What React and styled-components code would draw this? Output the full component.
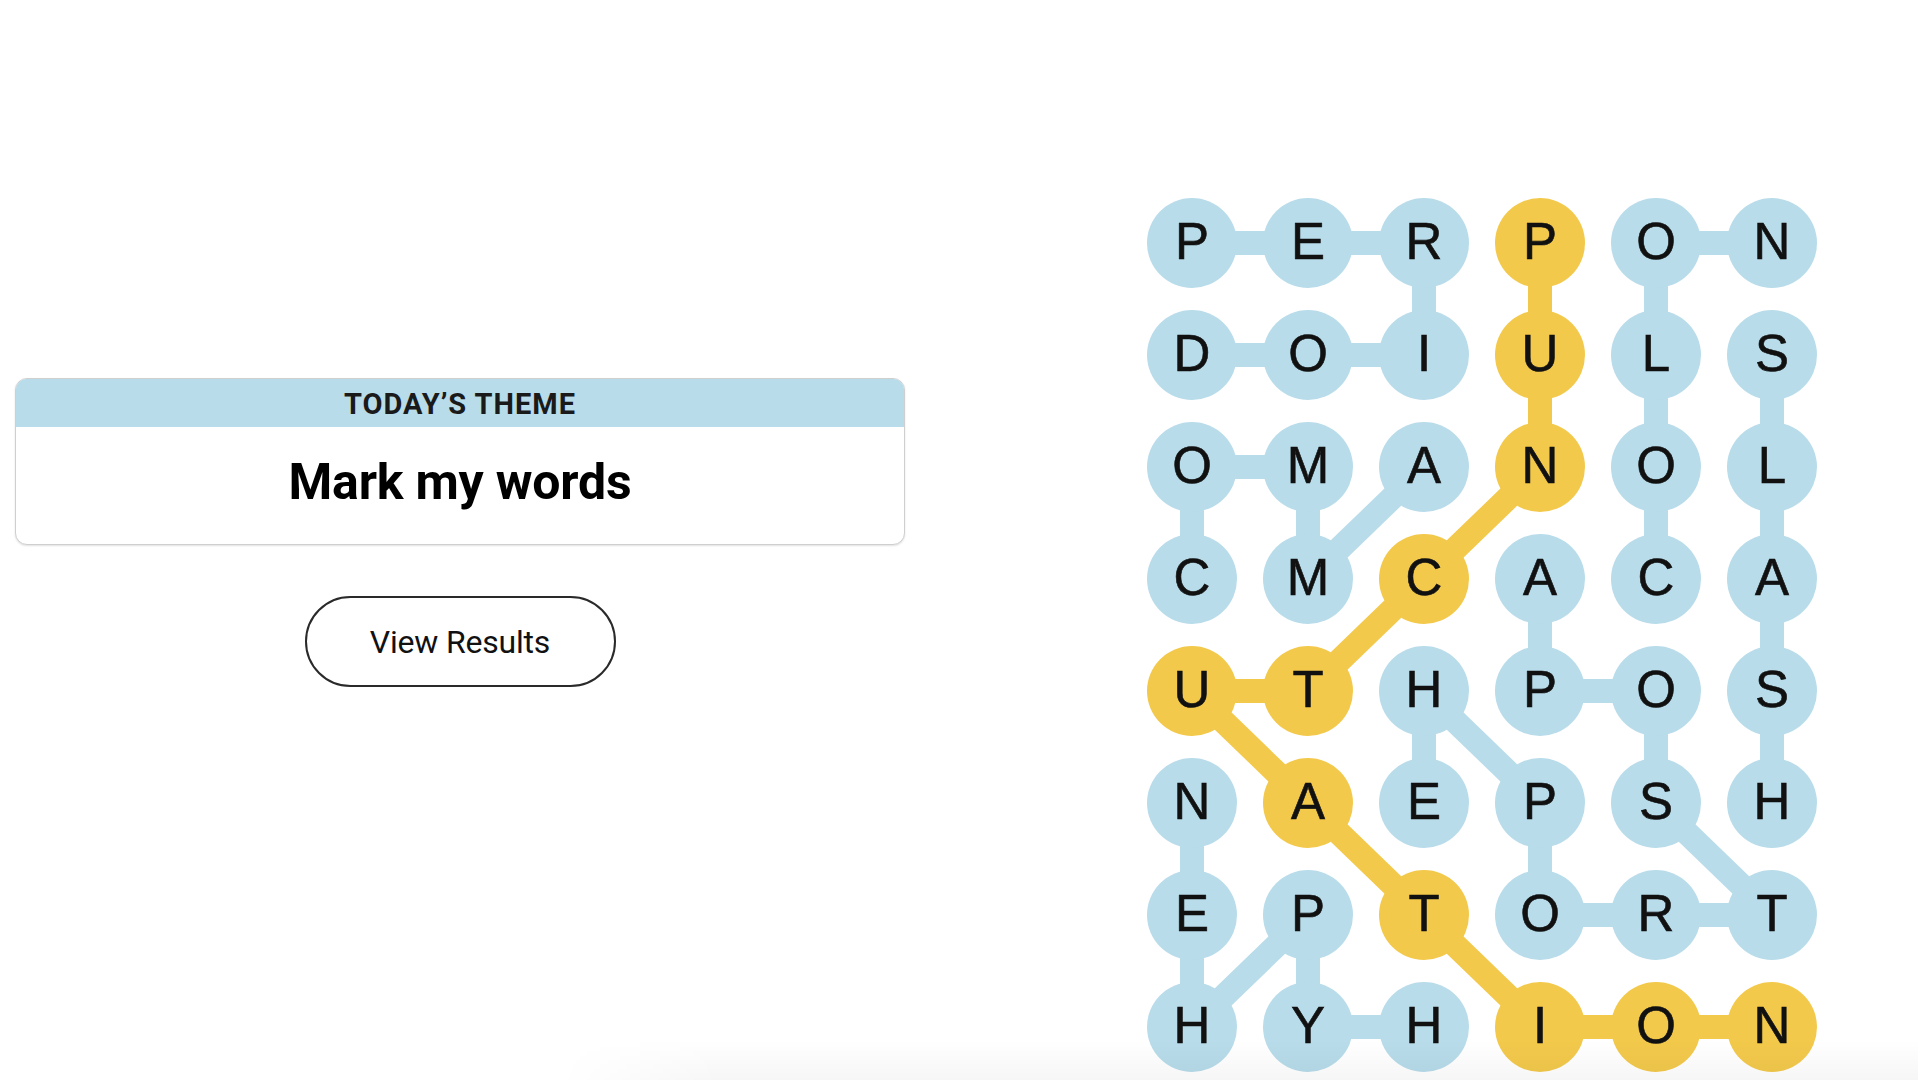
import React from "react";
import styled, { createGlobalStyle } from "styled-components";

const BLUE = "#b8dcea";
const YELLOW = "#f3c94c";

const GlobalStyle = createGlobalStyle`
  html, body { margin: 0; padding: 0; background: #ffffff; }
  body { font-family: "Liberation Sans", Arial, sans-serif; color: #000; }
  * { box-sizing: border-box; }
`;

const Page = styled.div`
  display: flex;
  flex-direction: row;
  align-items: flex-start;
  width: 1918px;
  height: 1080px;
  overflow: hidden;
  position: relative;
`;

const LeftPane = styled.section`
  width: 920px;
  padding: 378px 15px 0 15px;
  display: flex;
  flex-direction: column;
  align-items: center;
  gap: 51px;
`;

const ThemeCard = styled.div`
  width: 890px;
  border: 1.5px solid #cfcfcf;
  border-radius: 12px;
  overflow: hidden;
  background: #fff;
  box-shadow: 0 1px 2px rgba(0, 0, 0, 0.12);
`;

const ThemeHeader = styled.div`
  height: 48px;
  background: ${BLUE};
  display: flex;
  align-items: center;
  justify-content: center;
  padding-top: 1px;
  font-family: Roboto, "Liberation Sans", sans-serif;
  font-weight: 700;
  font-size: 29px;
  letter-spacing: 1px;
  color: #1a1a1a;
`;

const ThemeBody = styled.div`
  height: 117px;
  display: flex;
  align-items: center;
  justify-content: center;
  padding-bottom: 7px;
  font-family: Roboto, "Liberation Sans", sans-serif;
  font-weight: 700;
  font-size: 50px;
  letter-spacing: -0.2px;
  color: #000;
`;

const ResultsButton = styled.button`
  width: 311px;
  height: 91px;
  border: 2px solid #2a2a2a;
  border-radius: 46px;
  background: #fff;
  font-family: Roboto, "Liberation Sans", sans-serif;
  font-size: 32px;
  font-weight: 400;
  color: #111;
  cursor: pointer;
  letter-spacing: -0.2px;
`;

const RightPane = styled.section`
  padding-top: 198px;
  margin-left: 227px;
`;

const CELL = 90;
const COL_PITCH = 116;
const ROW_PITCH = 112;

const Board = styled.div`
  position: relative;
  display: grid;
  grid-template-columns: repeat(6, ${CELL}px);
  grid-auto-rows: ${CELL}px;
  column-gap: ${COL_PITCH - CELL}px;
  row-gap: ${ROW_PITCH - CELL}px;
`;

const Links = styled.svg`
  position: absolute;
  left: 0;
  top: 0;
  z-index: 0;
  pointer-events: none;
`;

const Letter = styled.div`
  position: relative;
  z-index: 1;
  width: ${CELL}px;
  height: ${CELL}px;
  border-radius: 50%;
  background: ${(p) => (p.$span ? YELLOW : BLUE)};
  display: flex;
  align-items: center;
  justify-content: center;
  font-family: "Liberation Sans", Arial, sans-serif;
  font-size: 51px;
  line-height: 1;
  color: #111;
  -webkit-text-stroke: 0.6px #111;
  padding-bottom: 3px;
`;

const BottomFade = styled.div`
  position: absolute;
  left: 560px;
  right: 0;
  bottom: 0;
  height: 40px;
  z-index: 2;
  pointer-events: none;
  background: linear-gradient(to bottom, rgba(0, 0, 0, 0), rgba(0, 0, 0, 0.035));
  -webkit-mask-image: linear-gradient(to right, transparent, #000 160px);
  mask-image: linear-gradient(to right, transparent, #000 160px);
`;

const GRID = ["PERPON", "DOIULS", "OMANOL", "CMCACA", "UTHPOS", "NAEPSH", "EPTORT", "HYHION"];

const WORDS = [
  { span: false, cells: [[0, 0], [0, 1], [0, 2], [1, 2], [1, 1], [1, 0]] },
  { span: false, cells: [[3, 0], [2, 0], [2, 1], [3, 1], [2, 2]] },
  { span: false, cells: [[3, 4], [2, 4], [1, 4], [0, 4], [0, 5]] },
  { span: false, cells: [[1, 5], [2, 5], [3, 5], [4, 5], [5, 5]] },
  { span: false, cells: [[7, 2], [7, 1], [6, 1], [7, 0], [6, 0], [5, 0]] },
  { span: false, cells: [[3, 3], [4, 3], [4, 4], [5, 4], [6, 5], [6, 4], [6, 3], [5, 3], [4, 2], [5, 2]] },
  { span: true, cells: [[0, 3], [1, 3], [2, 3], [3, 2], [4, 1], [4, 0], [5, 1], [6, 2], [7, 3], [7, 4], [7, 5]] },
];

const spanSet = new Set(WORDS.filter((w) => w.span).flatMap((w) => w.cells.map(([r, c]) => `${r},${c}`)));

const cx = (c) => c * COL_PITCH + CELL / 2;
const cy = (r) => r * ROW_PITCH + CELL / 2;

const BOARD_W = 5 * COL_PITCH + CELL;
const BOARD_H = 7 * ROW_PITCH + CELL;

function StrandsBoard() {
  return (
    <Board>
      <Links width={BOARD_W} height={BOARD_H} viewBox={`0 0 ${BOARD_W} ${BOARD_H}`}>
        {WORDS.map((w, wi) =>
          w.cells.slice(1).map(([r, c], i) => {
            const [pr, pc] = w.cells[i];
            return (
              <line
                key={`${wi}-${i}`}
                x1={cx(pc)}
                y1={cy(pr)}
                x2={cx(c)}
                y2={cy(r)}
                stroke={w.span ? YELLOW : BLUE}
                strokeWidth={24}
                strokeLinecap="butt"
              />
            );
          })
        )}
      </Links>
      {GRID.flatMap((row, r) =>
        row.split("").map((ch, c) => (
          <Letter key={`${r}-${c}`} $span={spanSet.has(`${r},${c}`)}>
            {ch}
          </Letter>
        ))
      )}
    </Board>
  );
}

export default function App() {
  return (
    <>
      <GlobalStyle />
      <Page>
        <LeftPane>
          <ThemeCard>
            <ThemeHeader>TODAY’S THEME</ThemeHeader>
            <ThemeBody>Mark my words</ThemeBody>
          </ThemeCard>
          <ResultsButton>View Results</ResultsButton>
        </LeftPane>
        <RightPane>
          <StrandsBoard />
        </RightPane>
        <BottomFade />
      </Page>
    </>
  );
}
